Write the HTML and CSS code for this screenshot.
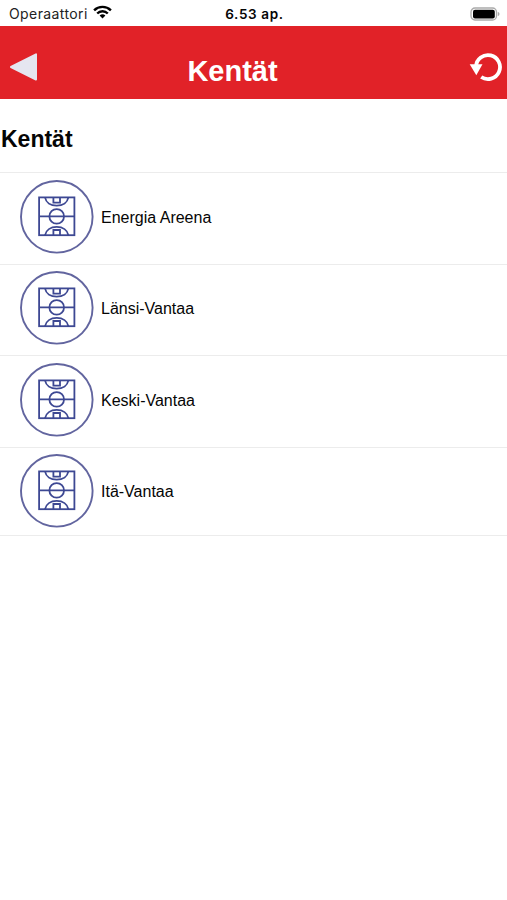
FILE: index.html
```html
<!DOCTYPE html>
<html lang="fi">
<head>
    <meta charset="UTF-8">
    <meta name="viewport" content="width=device-width, initial-scale=1.0">
    <title>Kentät</title>
    <link rel="stylesheet" href="styles.css">
</head>
<body>
    <!-- Court icon, shared by the list rows -->
    <svg class="sprite" width="0" height="0">
        <symbol id="court" viewBox="0 0 74 74">
            <g fill="none" stroke="#3d4893" stroke-width="1.8">
                <circle cx="36.8" cy="36.8" r="35.8" stroke="#62659f" stroke-width="1.9"/>
                <rect x="19.1" y="17.4" width="35.3" height="37.8"/>
                <path d="M19 36.4h35.4"/>
                <circle cx="36.7" cy="36.4" r="7.3"/>
                <path d="M25 17.4c1 5 5.5 8.3 11.7 8.3s10.7-3.3 11.7-8.3"/>
                <path d="M25 55.2c1-5 5.5-8.3 11.7-8.3s10.7 3.3 11.7 8.3"/>
                <path d="M33.4 17.4v5.2h6.600v-5.200M33.400 55.200v-5.200h6.600v5.200"/>
            </g>
        </symbol>
    </svg>

    <div class="status-bar">
        <div class="carrier">
            <span>Operaattori</span>
            <svg class="wifi" width="19" height="14" viewBox="0 0 19 14">
                <g fill="none" stroke="#000" stroke-width="2.4">
                    <path d="M1.1 5.3a12 12 0 0 1 16.8 0"/>
                    <path d="M4.2 8.5a7.500 7.500 0 0 1 10.600 0"/>
                </g>
                <path d="M9.5 13.6l-2.900-3a4.100 4.100 0 0 1 5.800 0z"/>
            </svg>
        </div>
        <span class="time">6.53 ap.</span>
        <svg class="battery" width="30" height="14" viewBox="0 0 30 14">
            <rect x="1" y="1" width="25.5" height="12" rx="4" fill="#fff" stroke="#aaa" stroke-width="1.3"/>
            <rect x="3" y="2.7" width="21.8" height="8.7" rx="2" fill="#000"/>
            <path d="M27.8 4.8c2.200 1 2.200 3.600 0 4.400z" fill="#aaa"/>
        </svg>
    </div>

    <header>
        <button class="back-btn" aria-label="Takaisin">
            <svg width="30" height="30" viewBox="0 0 30 30">
                <path d="M2 15L27 2.300v25.200z" fill="#e5e6f0" stroke="#e5e6f0" stroke-width="2" stroke-linejoin="round"/>
            </svg>
        </button>
        <h1>Kentät</h1>
        <button class="refresh-btn" aria-label="Päivitä">
            <svg width="34" height="32" viewBox="0 0 34 32">
                <path d="M7 15.500A12 12 0 1 1 12.200 26" fill="none" stroke="#fff" stroke-width="3.800"/>
                <path d="M.700 13.200h12.800L7.300 24.200z" fill="#fff"/>
            </svg>
        </button>
    </header>

    <main>
        <h2>Kentät</h2>
        <ul class="fields">
            <li><svg class="icon"><use href="#court"/></svg><span>Energia Areena</span></li>
            <li><svg class="icon"><use href="#court"/></svg><span>Länsi-Vantaa</span></li>
            <li><svg class="icon"><use href="#court"/></svg><span>Keski-Vantaa</span></li>
            <li><svg class="icon"><use href="#court"/></svg><span>Itä-Vantaa</span></li>
        </ul>
    </main>
</body>
</html>
```

FILE: styles.css
```css
* {
    box-sizing: border-box;
}

body {
    font-family: "Liberation Sans", Arial, sans-serif;
    margin: 0;
    background: white;
    color: #050505;
}

.sprite {
    display: block;
}

.status-bar {
    display: grid;
    grid-template-columns: 1fr auto 1fr;
    align-items: center;
    height: 25.5px;
    padding: 2px 7px 0 9px;
    font-family: Inter, sans-serif;
    font-size: 14px;
}

.carrier {
    display: flex;
    align-items: center;
    gap: 5px;
    color: #222;
    letter-spacing: 0.4px;
}

.wifi {
    margin-top: -3px;
}

.time {
    font-size: 13.5px;
    font-weight: 600;
    letter-spacing: 0.65px;
}

.battery {
    justify-self: end;
}

header {
    display: grid;
    grid-template-columns: 40px 1fr 40px;
    align-items: center;
    height: 73px;
    padding: 9px 4px 0 9px;
    background: #e12228;
    color: white;
}

header button {
    height: 32px;
    padding: 0;
    border: none;
    background: none;
    cursor: pointer;
}

header svg {
    display: block;
}

.refresh-btn {
    justify-self: end;
}

h1 {
    margin: 9px 0 0;
    padding-right: 47px;
    font-size: 29px;
    line-height: 34px;
    text-align: center;
}

h2 {
    margin: 0;
    padding: 26px 1px 19.5px;
    font-size: 23px;
    line-height: 28px;
}

.fields {
    list-style: none;
    margin: 0;
    padding: 0;
    border-bottom: 1px solid #ececec;
}

.fields li {
    display: flex;
    align-items: center;
    gap: 7px;
    height: 91.6px;
    padding: 0 20px 3px;
    border-top: 1px solid #ececec;
    font-size: 16px;
}

.fields li:last-child {
    height: 88px;
    padding-bottom: 0;
}

.fields span {
    padding-top: 2px;
}

.icon {
    width: 74px;
    height: 74px;
}
```
